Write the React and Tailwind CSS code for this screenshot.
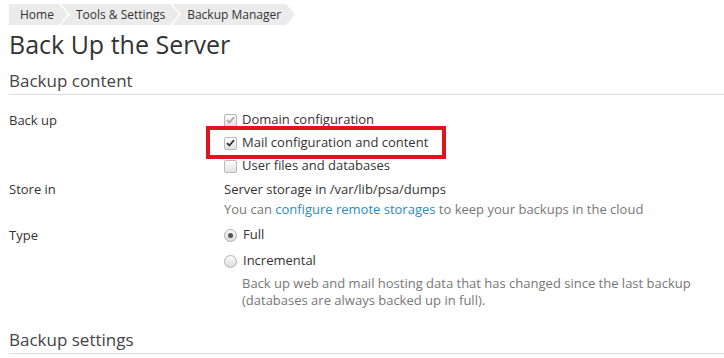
import React from 'react';

const crumbs = ['Home', 'Tools & Settings', 'Backup Manager'];

function Check({ checked, disabled }) {
  return (
    <span className="w-[13px] h-[13px] rounded-[2px] border border-[#b9b9b9] bg-gradient-to-b from-[#fafafa] to-[#e2e2e2] flex items-center justify-center shrink-0">
      {checked && (
        <svg width="9" height="8" viewBox="0 0 9 8">
          <path d="M1 4.2 L3.4 6.5 L8 1.2" fill="none" stroke={disabled ? '#a8a8a8' : '#333'} strokeWidth="1.8" />
        </svg>
      )}
    </span>
  );
}

function Radio({ checked }) {
  return (
    <span className="w-[13px] h-[13px] rounded-full border border-[#b0b0b0] bg-gradient-to-b from-[#fafafa] to-[#dcdcdc] flex items-center justify-center shrink-0">
      {checked && <span className="w-[5px] h-[5px] rounded-full bg-[#555]" />}
    </span>
  );
}

export default function App() {
  return (
    <div className="w-[724px] h-[358px] overflow-hidden bg-white text-[#333] text-[13px] font-['Open_Sans',sans-serif] pl-[9px]">
      {/* breadcrumbs */}
      <div className="flex pt-[4px] h-[25px]">
        {crumbs.map((c, i) => (
          <div
            key={c}
            className={`h-[21px] bg-[#ebebeb] flex items-center text-[12px] text-[#333] pr-[14px] ${
              i === 0
                ? 'pl-[11px] [clip-path:polygon(0_0,calc(100%-9px)_0,100%_50%,calc(100%-9px)_100%,0_100%)]'
                : 'pl-[15px] -ml-[7px] [clip-path:polygon(0_0,calc(100%-9px)_0,100%_50%,calc(100%-9px)_100%,0_100%,9px_50%)]'
            }`}
          >
            {c}
          </div>
        ))}
      </div>

      <h1 className="text-[25px] leading-[34px] mt-[2px] text-[#333]">Back Up the Server</h1>

      <h2 className="text-[17px] leading-[24px] mt-[8px] text-[#444] pb-[1px] border-b border-[#dcdcdc]">Backup content</h2>

      <div className="grid grid-cols-[215px_1fr] mt-[15px]">
        <div className="leading-[20px]">Back up</div>
        <div>
          <div className="flex items-center gap-[5px] h-[20px]">
            <Check checked disabled />
            <span>Domain configuration</span>
          </div>
          <div className="relative flex items-center gap-[5px] h-[20px] mt-[3px]">
            <div className="absolute left-[-18px] top-[-7px] w-[240px] h-[33px] border-[4px] border-[#e0141e]" />
            <Check checked />
            <span>Mail configuration and content</span>
          </div>
          <div className="flex items-center gap-[5px] h-[20px] mt-[3px]">
            <Check />
            <span>User files and databases</span>
          </div>
        </div>

        <div className="leading-[20px] mt-[3px]">Store in</div>
        <div className="mt-[3px] leading-[20px]">
          <div>Server storage in /var/lib/psa/dumps</div>
          <div className="text-[#777]">
            You can <span className="text-[#2b8ac0]">configure remote storages</span> to keep your backups in the cloud
          </div>
        </div>

        <div className="leading-[20px] mt-[6px]">Type</div>
        <div className="mt-[6px]">
          <div className="flex items-center gap-[6px] h-[20px]">
            <Radio checked />
            <span>Full</span>
          </div>
          <div className="flex items-center gap-[6px] h-[20px] mt-[6px]">
            <Radio />
            <span>Incremental</span>
          </div>
          <div className="pl-[18px] text-[#777] leading-[17px] mt-[4px]">
            Back up web and mail hosting data that has changed since the last backup
            <br />
            (databases are always backed up in full).
          </div>
        </div>
      </div>

      <h2 className="text-[17px] leading-[24px] mt-[19px] text-[#444] pb-[1px] border-b border-[#dcdcdc]">Backup settings</h2>
    </div>
  );
}
